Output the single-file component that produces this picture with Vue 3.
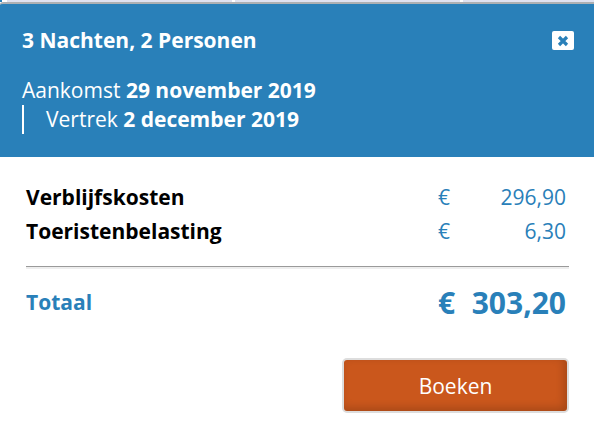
<script setup>
const stay = { title: '3 Nachten, 2 Personen', arrival: '29 november 2019', departure: '2 december 2019' }
const costs = [
  { label: 'Verblijfskosten', amount: '296,90' },
  { label: 'Toeristenbelasting', amount: '6,30' },
]
const total = '303,20'
</script>

<template>
  <main class="booking">
    <div class="strip">
      <span class="cell cell-edge"></span>
      <span class="cell cell-wide"></span>
      <span class="cell cell-wide"></span>
      <span class="cell cell-rest"></span>
    </div>
    <header class="header">
      <div class="title-row">
        <h1 class="title">{{ stay.title }}</h1>
        <button class="close" type="button" aria-label="Sluiten">
          <svg class="cross" viewBox="0 0 12 12" aria-hidden="true">
            <path d="M2 2L10 10M10 2L2 10" fill="none" stroke="currentColor" stroke-width="3.2" />
          </svg>
        </button>
      </div>
      <p class="date">Aankomst <b>{{ stay.arrival }}</b></p>
      <p class="date departure">Vertrek <b>{{ stay.departure }}</b></p>
    </header>
    <section class="body">
      <table class="costs">
        <tbody>
          <tr v-for="cost in costs" :key="cost.label">
            <th scope="row">{{ cost.label }}</th>
            <td class="currency">€</td>
            <td class="amount">{{ cost.amount }}</td>
          </tr>
        </tbody>
        <tfoot>
          <tr class="rule">
            <td colspan="3"><hr /></td>
          </tr>
          <tr class="total">
            <th scope="row">Totaal</th>
            <td class="currency">€</td>
            <td class="amount">{{ total }}</td>
          </tr>
        </tfoot>
      </table>
      <div class="actions">
        <button class="book" type="button">Boeken</button>
      </div>
    </section>
  </main>
</template>

<style>
body {
  margin: 0;
  background: #fff;
}
</style>

<style scoped>
.booking {
  font-family: "Open Sans", "Noto Sans", sans-serif;
  font-size: 21px;
  color: #000;
}

.strip {
  display: flex;
  gap: 3px;
  height: 2px;
  background: #fff;
}

.cell {
  background: #dfe2f0;
}

.cell-edge {
  width: 2px;
  margin-right: 2px;
  background: #2980b9;
}

.cell-wide {
  width: 225px;
}

.cell-rest {
  flex: 1;
}

.header {
  padding: 22px 20px 23px 22px;
  border-top: 2px solid #adb0b3;
  border-top-left-radius: 3px;
  background: #2980b9;
  color: #fff;
}

.title-row {
  display: flex;
  align-items: center;
  justify-content: space-between;
  margin-bottom: 21px;
}

.title {
  margin: 0;
  font-size: 21px;
  font-weight: 700;
  line-height: 29px;
}

.close {
  display: flex;
  align-items: center;
  justify-content: center;
  width: 22px;
  height: 19px;
  padding: 0;
  border: 0;
  border-radius: 2px;
  background: #fff;
  color: #2980b9;
}

.cross {
  width: 12px;
  height: 12px;
}

.date {
  margin: 0;
  line-height: 29px;
}

.departure {
  padding-left: 22px;
  border-left: 2px solid #fff;
}

.body {
  padding: 23px 25px 24px 26px;
}

.costs {
  width: 100%;
  border-collapse: collapse;
  line-height: 34px;
}

.costs th {
  padding: 0;
  text-align: left;
}

.costs td {
  padding: 0;
  color: #2980b9;
}

.costs .currency {
  width: 28px;
}

.costs .amount {
  width: 100px;
  padding-right: 3px;
  text-align: right;
}

.costs hr {
  margin: 18px 0 16px;
  border: 0;
  border-top: 1px solid #9a9a9a;
  border-bottom: 2px solid #eee;
}

.costs .total th {
  padding-bottom: 1px;
  color: #2980b9;
}

.costs .total td {
  padding-top: 1px;
  font-size: 30px;
  font-weight: 700;
}

.actions {
  display: flex;
  justify-content: flex-end;
  margin-top: 38px;
}

.book {
  width: 227px;
  height: 55px;
  padding: 0;
  border: 2px solid #ddd;
  border-radius: 5px;
  background: #ca571c;
  box-shadow: inset -3px -3px 8px rgba(0, 0, 0, 0.18);
  color: #fff;
  font: inherit;
}
</style>
